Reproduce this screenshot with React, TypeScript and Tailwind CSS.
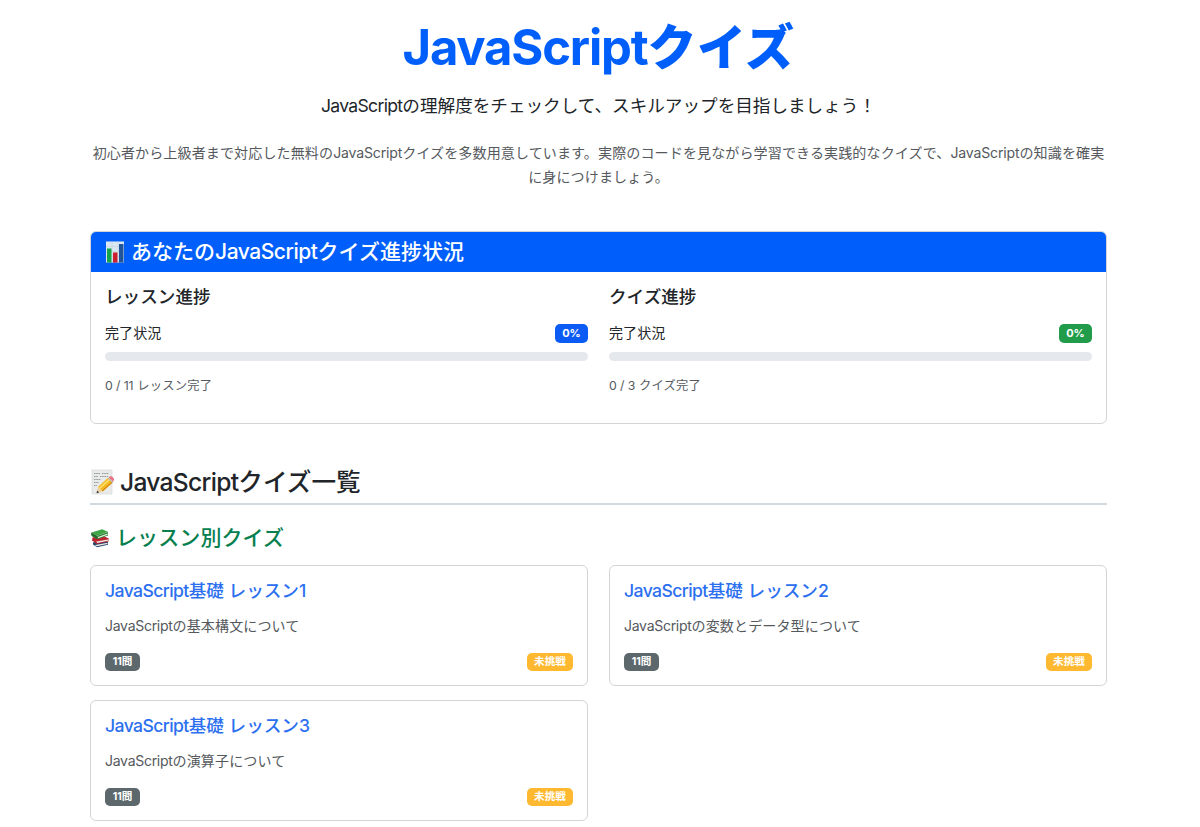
import type { ReactNode } from 'react';

const lessons = [
  { id: 1, title: '基礎 レッスン1', description: 'の基本構文について', questions: 11 },
  { id: 2, title: '基礎 レッスン2', description: 'の変数とデータ型について', questions: 11 },
  { id: 3, title: '基礎 レッスン3', description: 'の演算子について', questions: 11 },
];

const ChartIcon = () => (
  <svg viewBox="0 0 20 22" className="h-[22px] w-5 shrink-0">
    <rect x="1" y="0.5" width="18" height="21" fill="#dbe8f2" />
    <path d="M1 5.5h18M1 10.5h18M1 15.5h18M7 .5v21M13 .5v21" stroke="#bccfdd" strokeWidth="0.5" />
    <rect x="2" y="7.5" width="4.5" height="14" fill="#16a34a" />
    <rect x="8" y="11.5" width="4.5" height="10" fill="#c91f2c" />
    <rect x="14" y="3" width="4.5" height="18.5" fill="#20559c" />
  </svg>
);

const MemoIcon = () => (
  <svg viewBox="0 0 24 26" className="h-[26px] w-6 shrink-0">
    <rect x="2" y="1" width="20" height="24" fill="#e9eaea" stroke="#d3d5d6" strokeWidth="0.6" />
    <path
      d="M4 4.5h6M12 4.5h7M4 7.5h4M10 7.5h8M4 10.5h7M4 13.5h5M4 16.5h3"
      stroke="#8e9295"
      strokeWidth="0.9"
      strokeDasharray="1.6 .6"
    />
    <path d="M6.5 24.2l1.6-6.4 4.8 4.6z" fill="#efcf9d" />
    <path d="M6.5 24.2l.7-2.6 1.9 1.8z" fill="#3b3b3b" />
    <path d="M8.1 17.8L18.4 8.6l4.8 4.6-10.3 9.2z" fill="#f5b921" />
    <path d="M9.6 19.3l10.3-9.2" stroke="#fde173" strokeWidth="1.5" />
    <path d="M12.3 21.8l10.3-9.2" stroke="#cf8412" strokeWidth="1.1" />
    <path d="M17.6 9.3l1-.9 4.8 4.6-1 .9z" fill="#b9bcc0" />
    <path d="M18.8 8.4l.9-.8c2-1.4 5.2 1.9 4.1 3.8l-.7 1.2z" fill="#ea7186" />
  </svg>
);

const BooksIcon = () => (
  <svg viewBox="0 0 20 20" className="h-5 w-5 shrink-0">
    <path d="M3 14.5l10-2.3 5 1.8v2.7L7 19.3l-4-2.7z" fill="#25476c" />
    <path d="M5.5 17.1L17.5 14.7v1.2L7 18.2l-2-.7z" fill="#e9e6e0" />
    <path d="M2.5 9.5l10-1.8 6 2.5v3.3L7 16l-5-3.4z" fill="#bd2430" />
    <path d="M6.3 13.6l11.7-2v1.1L7.2 14.9z" fill="#eee9e2" />
    <path d="M1.5 4.6L12 1.3l6 2.4L7.3 7.7z" fill="#3fa548" />
    <path d="M1.5 4.6l5.8 3.1v3.6L2 8.3C.9 7 .8 5.5 1.5 4.6z" fill="#20702f" />
    <path d="M7.3 7.7L18 3.9v3.7L7.3 11.3z" fill="#2a8637" />
    <path d="M8 9l9.6-3.5v1.2L8 10.2z" fill="#f0ece4" />
  </svg>
);

const Badge = ({ className, children }: { className: string; children: ReactNode }) => (
  <span className={`rounded-[5px] text-center font-bold text-white ${className}`}>{children}</span>
);

const Progress = ({ title, badge, total, unit }: { title: string; badge: string; total: number; unit: string }) => (
  <div>
    <h3 className="text-[17.6px] leading-[22px] font-medium">{title}</h3>
    <div className="mt-[14px] flex items-center justify-between">
      <span className="text-[14px] leading-[22px] tracking-[0.1px]">完了状況</span>
      <Badge className={`w-[33px] text-[11px] leading-[19px] ${badge}`}>0%</Badge>
    </div>
    <div className="mt-2 h-[9px] rounded-full bg-[#e5e9ed]"></div>
    <p className="mt-[16px] text-[12.3px] leading-[18px] tracking-[0.2px] text-[#555a5f]">
      <span className="tracking-[-0.1px]">0 / {total}</span> {unit}完了
    </p>
  </div>
);

const App = () => {
  return (
    <div
      lang="ja"
      className="h-[827px] overflow-hidden bg-white pl-[90px] font-['Inter','Noto_Sans_CJK_JP',sans-serif] text-[#212529]"
    >
      <div className="w-[1017px]">
        <header className="pt-[18px] text-center">
          <h1 className="text-[49px] leading-[60px] font-bold text-[#005ffb]">
            <span className="tracking-[-1.2px]">JavaScript</span>
            <span className="font-black tracking-[0.5px]">クイズ</span>
          </h1>
          <p className="mt-[15px] text-[17.6px] leading-[26px]">
            <span className="tracking-[-0.7px]">JavaScript</span>の理解度をチェックして、スキルアップを目指しましょう！
          </p>
          <p className="mt-[22px] text-[14.05px] leading-[24px] tracking-[0.1px] text-[#55595d]">
            初心者から上級者まで対応した無料の<span className="tracking-[-0.15px]">JavaScript</span>
            クイズを多数用意しています。実際のコードを見ながら学習できる実践的なクイズで、
            <span className="tracking-[-0.15px]">JavaScript</span>の知識を確実
            <br />
            に身につけましょう。
          </p>
        </header>

        <section className="mt-[42px] h-[193px] overflow-hidden rounded-[6px] border border-[#d3d5d7]">
          <h2 className="-mx-px -mt-px flex h-[41px] items-center bg-[#005ffb] pl-[15px] text-[21px] leading-[40px] font-medium text-white">
            <ChartIcon />
            <span className="ml-[6px]">
              あなたの<span className="tracking-[-0.45px]">JavaScript</span>クイズ進捗状況
            </span>
          </h2>
          <div className="grid grid-cols-2 gap-[21px] px-[14px] pt-[14px]">
            <Progress title="レッスン進捗" badge="bg-[#0a5cf5]" total={11} unit="レッスン" />
            <Progress title="クイズ進捗" badge="bg-[#209c4b]" total={3} unit="クイズ" />
          </div>
        </section>

        <section className="mt-[42px]">
          <h2 className="flex h-[39px] items-center border-b-2 border-[#d0d8e0] pb-[5px] text-[24.6px] leading-[32px] font-medium">
            <MemoIcon />
            <span className="ml-[6px]">
              <span className="tracking-[-0.7px]">JavaScript</span>クイズ一覧
            </span>
          </h2>
          <h3 className="mt-[20px] flex h-[26px] items-center text-[21px] leading-[26px] font-medium tracking-[0.1px] text-[#087f4f]">
            <BooksIcon />
            <span className="ml-[6px]">レッスン別クイズ</span>
          </h3>
          <div className="mt-[14px] grid grid-cols-2 gap-x-[21px] gap-y-[14.5px]">
            {lessons.map((lesson) => (
              <div key={lesson.id} className="h-[120.5px] rounded-[6px] border border-[#d3d5d7] px-[14px] pt-[14px]">
                <h4 className="text-[17.6px] leading-[22px] font-medium text-[#2c70f0]">
                  <span className="tracking-[-0.6px]">JavaScript</span>
                  {lesson.title}
                </h4>
                <p className="mt-[13px] text-[14.05px] leading-[22px] tracking-[0.1px] text-[#55595d]">
                  <span className="tracking-[-0.3px]">JavaScript</span>
                  {lesson.description}
                </p>
                <div className="mt-[16px] flex justify-between">
                  <Badge className="w-[35px] bg-[#5d686d] text-[10.6px] leading-[18px]">{lesson.questions}問</Badge>
                  <Badge className="w-[46px] bg-[#ffb930] text-[10.6px] leading-[18px]">未挑戦</Badge>
                </div>
              </div>
            ))}
          </div>
        </section>
      </div>
    </div>
  );
};

export default App;
